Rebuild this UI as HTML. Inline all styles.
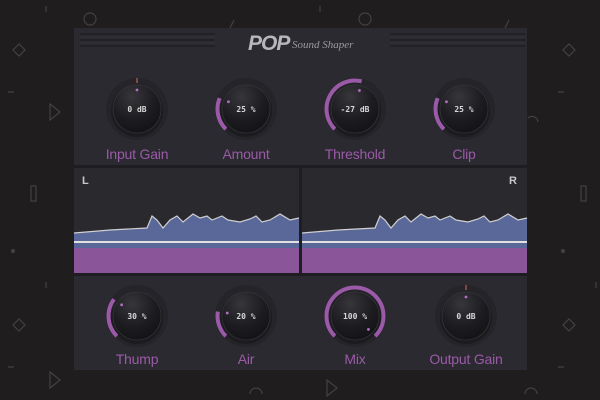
<!DOCTYPE html>
<html><head><meta charset="utf-8"><style>
html,body{margin:0;padding:0;width:600px;height:400px;overflow:hidden;background:#1f1d1e;font-family:"Liberation Sans",sans-serif}
.panel{position:absolute;left:74px;top:28px;width:453px;height:342px;background:#2b2a30}
.lbl{position:absolute;color:#9b5aa8;font-size:14px;text-align:center;width:120px;transform:translateX(-60px);letter-spacing:-0.2px}
.val{font-family:"DejaVu Sans Mono","Liberation Mono",monospace;font-size:8px;font-weight:bold;fill:#d8d8d8}
</style></head><body>
<svg width="600" height="400" style="position:absolute;left:0;top:0" fill="none" stroke="#434142" stroke-width="1.2">
<circle cx="90" cy="19" r="6"/><circle cx="365" cy="19" r="6"/>
<path d="M13 50l6-6 6 6-6 6z M563 50l6-6 6 6-6 6z M13 325l6-6 6 6-6 6z M563 325l6-6 6 6-6 6z"/>
<path d="M50 104l10 8-10 8z M50 372l10 8-10 8z M327 380l10 8-10 8z"/>
<rect x="31" y="186" width="5" height="15"/><rect x="581" y="186" width="5" height="15"/>
<path d="M46 6v6 M320 6v6 M46 282v6 M596 282v6 M8 92h6 M558 92h6 M8 367h6 M558 367h6 M230 28l4-8 M505 28l4-8"/>
<circle cx="13" cy="251" r="1.5" fill="#434142"/><circle cx="563" cy="251" r="1.5" fill="#434142"/>
<path d="M250 394a6 6 0 0 1 12 0 M525 394a6 6 0 0 1 12 0 M528 118a6 6 0 0 1 10 4"/>
</svg>
<div class="panel"></div>
<svg width="600" height="400" style="position:absolute;left:0;top:0">
<g stroke="#222126" stroke-width="2">
<path d="M80 34h135 M80 40h135 M80 46h135 M390 34h135 M390 40h135 M390 46h135"/></g>
<g stroke="#34333a" stroke-width="1"><path d="M80 37h135 M80 43h135 M390 37h135 M390 43h135"/></g>
<text x="248" y="50" font-family="Liberation Sans" font-weight="bold" font-style="italic" font-size="21" fill="#b8b8bc" letter-spacing="-1">POP</text>
<text x="292" y="48" font-family="Liberation Serif" font-style="italic" font-size="11" fill="#9a9a9e">Sound Shaper</text>
<rect x="74" y="165" width="453" height="3" fill="#1e1d22"/>
<rect x="74" y="273" width="453" height="3" fill="#1e1d22"/>
<rect x="74" y="168" width="225" height="105" fill="#2a292e"/>
<rect x="302" y="168" width="225" height="105" fill="#2a292e"/>
<rect x="299" y="168" width="3" height="105" fill="#1e1d22"/>
<g id="wL">
<path d="M74 233 L110 230 L147 228 L152 216 L157 220 L163 228 L170 220 L177 216 L183 222 L193 214 L200 218 L207 216 L212 220 L222 216 L228 220 L240 222 L250 219 L256 216 L262 222 L270 220 L280 214 L290 220 L299 218 L299 248 L74 248Z" fill="#5a6899"/>
<path d="M74 233 L110 230 L147 228 L152 216 L157 220 L163 228 L170 220 L177 216 L183 222 L193 214 L200 218 L207 216 L212 220 L222 216 L228 220 L240 222 L250 219 L256 216 L262 222 L270 220 L280 214 L290 220 L299 218" fill="none" stroke="#d0d0d0" stroke-width="1.2"/>
<rect x="74" y="248" width="225" height="25" fill="#8a5599"/>
<rect x="74" y="241" width="225" height="2" fill="#e0e0e0"/>
</g>
<use href="#wL" transform="translate(228 0)"/>
<text x="82" y="184" font-size="11" font-weight="bold" fill="#c8c8cc" font-family="Liberation Sans">L</text>
<text x="509" y="184" font-size="11" font-weight="bold" fill="#c8c8cc" font-family="Liberation Sans">R</text>
<defs><radialGradient id="kg" cx="0.4" cy="0.25" r="0.85"><stop offset="0" stop-color="#37363b"/><stop offset="0.55" stop-color="#1d1c20"/><stop offset="1" stop-color="#111013"/></radialGradient></defs>
<g id="knobs"></g>
</svg>
<div class="lbl" style="left:137px;top:146px">Input Gain</div>
<div class="lbl" style="left:246px;top:146px">Amount</div>
<div class="lbl" style="left:355px;top:146px">Threshold</div>
<div class="lbl" style="left:464px;top:146px">Clip</div>
<div class="lbl" style="left:137px;top:351px">Thump</div>
<div class="lbl" style="left:246px;top:351px">Air</div>
<div class="lbl" style="left:355px;top:351px">Mix</div>
<div class="lbl" style="left:466px;top:351px">Output Gain</div>
<script>
var K=[[137,109,0.5,'0 dB',1],[246,109,0.25,'25 %',0],[355,109,0.55,'-27 dB',0],[464,109,0.25,'25 %',0],
[137,316,0.3,'30 %',0],[246,316,0.2,'20 %',0],[355,316,1,'100 %',0],[466,316,0.5,'0 dB',1]];
var s='';
function pt(cx,cy,r,a){a=a*Math.PI/180;return [cx+r*Math.sin(a),cy-r*Math.cos(a)];}
K.forEach(function(k){var cx=k[0],cy=k[1];
s+='<circle cx="'+cx+'" cy="'+cy+'" r="31" fill="#252429"/>';
s+='<circle cx="'+cx+'" cy="'+(cy+2)+'" r="26" fill="#18171a" opacity="0.6"/>';
s+='<circle cx="'+cx+'" cy="'+cy+'" r="24" fill="url(#kg)" stroke="#3c3b41" stroke-width="0.6"/>';
var a0=-135,a1=-135+270*k[2];
if(k[4]){s+='<line x1="'+cx+'" y1="'+(cy-31)+'" x2="'+cx+'" y2="'+(cy-26)+'" stroke="#c0605a" stroke-width="1.2"/>';}
else{var p0=pt(cx,cy,28.5,a0),p1=pt(cx,cy,28.5,a1);var lg=(a1-a0)>180?1:0;
s+='<path d="M'+p0[0]+' '+p0[1]+' A28.5 28.5 0 '+lg+' 1 '+p1[0]+' '+p1[1]+'" stroke="#9b5aa8" stroke-width="4" fill="none"/>';}
var d=pt(cx,cy,19,a1);s+='<circle cx="'+d[0]+'" cy="'+d[1]+'" r="1.4" fill="#b070c0"/>';
s+='<text class="val" x="'+cx+'" y="'+(cy+3)+'" text-anchor="middle">'+k[3]+'</text>';});
document.getElementById('knobs').innerHTML=s;
</script>
</body></html>
